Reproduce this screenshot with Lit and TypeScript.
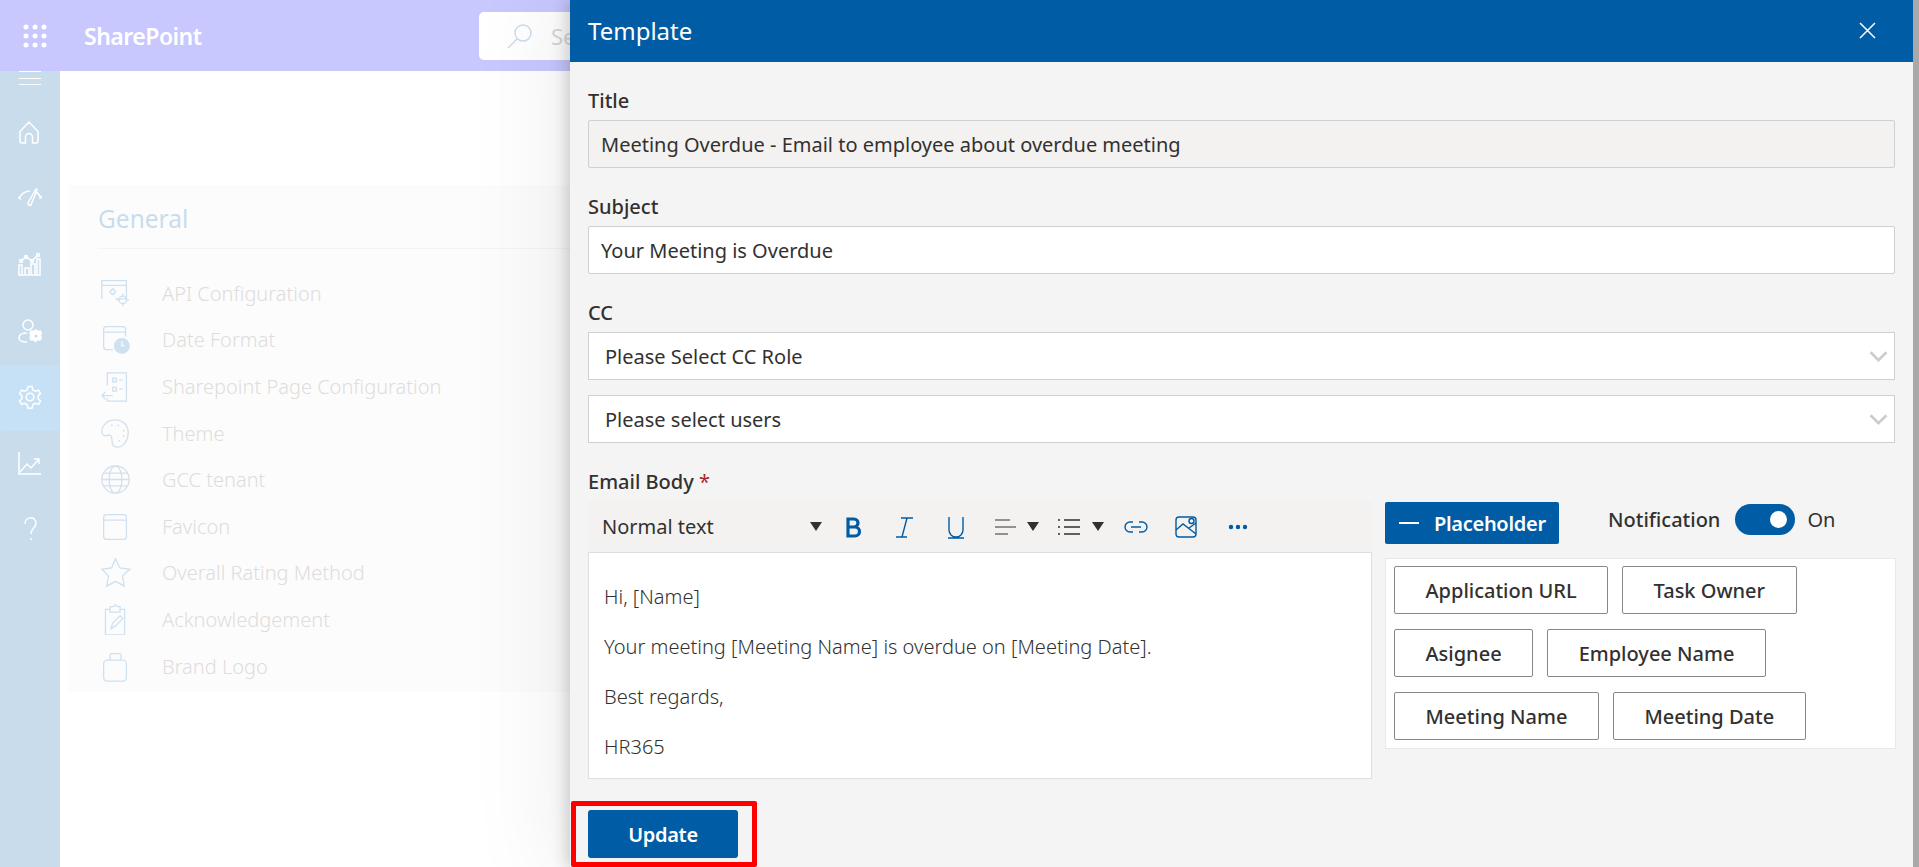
import { LitElement, html, css, svg } from "lit";
import { customElement } from "lit/decorators.js";

const line = (d: string) => svg`<path d=${d} />`;

const navIcons = [
  svg`<path d="M2 11.500 11 2l9 9.500V21a2 2 0 0 1-2 2h-3.500v-6a3.500 3.500 0 0 0-7 0v6H4a2 2 0 0 1-2-2z" />`,
  svg`<path d="M1 12.500A13 13 0 0 1 12 5M17.500 5.500A13 13 0 0 1 23 12.500M0 11l3 2.500M24 10l-2.500 3" /><path d="M18 3 10 17a2 2 0 0 0 3 2L19 4z" />`,
  svg`<path d="M1 23V13h3v10zM7 23V16h4v7zM13 23V12h4v11zM19 23V7h3v16zM1 23h21M3 9l5-4 6 4 6-6" /><circle cx="3" cy="9" r="1.500" /><circle cx="8" cy="5" r="1.500" /><circle cx="14" cy="9" r="1.500" /><circle cx="20" cy="3" r="1.500" />`,
  svg`<circle cx="10" cy="6" r="5" /><path d="M9 14c-5 0-8 2-8 5s3 4 8 4" /><path class="solid" d="m18 11 2 1.500 2.500-.5 1 2.500-1.500 2 1.500 2-1.500 2.500-2.500-.5-2 2-2-2-2.500.5-1-2.500 1-2-1-2 1-2.500 2.500.5z" /><circle cx="18" cy="17" r="1.500" fill="#c9dcec" stroke="none" />`,
  svg`<circle cx="12" cy="12" r="3.800" /><path d="m10 1.500h4l.8 3.300 2.500 1.400 3.200-1 2 3.400-2.400 2.300v2.800l2.400 2.300-2 3.400-3.200-1-2.500 1.400-.8 3.400h-4l-.8-3.400-2.500-1.400-3.200 1-2-3.400 2.400-2.300v-2.800l-2.400-2.300 2-3.400 3.200 1 2.500-1.400z" />`,
  svg`<path d="M1 1v22h22M2 21l7-8 4 4 8-9M16 8h5v5" />`,
  svg`<path d="M7 7c0-8 11-8 11-1 0 5-5 5-5 11" /><path d="M13 21v2" />`,
];

const listIcons = [
  svg`<path d="M2 23V3h27v20H17M2 8h27" /><circle cx="25" cy="24" r="4" /><circle cx="14" cy="15" r="2.500" /><path d="M25 17v3M25 28v3M18 24h3M29 24h3M14 11v1M14 18v1M10 15h1M17 15h1" />`,
  svg`<path d="M14 28H7a3 3 0 0 1-3-3V6a3 3 0 0 1 3-3h18a3 3 0 0 1 3 3v8M4 9h24" /><circle class="filled" cx="24" cy="24" r="8" /><path class="cut" d="M24 19v5h3" />`,
  svg`<path d="M8 16V2h21v31H8v-3" /><rect x="14" y="8" width="4" height="4" /><rect x="14" y="18" width="4" height="4" /><path d="M21 10h4M21 20h4M2 27h12M2 27l4-4M2 27l4 4" />`,
  svg`<path d="M17 2C8 2 2 8 2 15c0 4 3 5 6 4s5 0 5 4c0 6 2 9 6 9 7 0 12-8 12-16S25 2 17 2z" /><circle class="dot" cx="13" cy="8" r="1" /><circle class="dot" cx="20" cy="8" r="1" /><circle class="dot" cx="26" cy="14" r="1" /><circle class="dot" cx="26" cy="20" r="1" /><circle class="dot" cx="21" cy="25" r="1" />`,
  svg`<circle cx="17" cy="17" r="15" /><ellipse cx="17" cy="17" rx="7" ry="15" /><path d="M2 17h30M4 10h26M4 24h26" />`,
  svg`<rect x="4" y="4" width="25" height="27" rx="3" /><path d="M4 10h25" />`,
  svg`<path d="m17 2 4.800 10 10.700 1.500-7.800 7.500 2 11-9.700-5.300L7.300 32l2-11L2 13.500 12.700 12z" />`,
  svg`<path d="M11 6H6v28h21V6h-5M11 3h4l2-2 2 2h3v6H11zM12 27l2-6 8-8 3 3-8 8zM12 27l5-3" />`,
  svg`<rect x="4" y="10" width="25" height="23" rx="4" /><path d="M11 10V5a2 2 0 0 1 2-2h8a2 2 0 0 1 2 2v5" />`,
];

const settings = [
  "API Configuration",
  "Date Format",
  "Sharepoint Page Configuration",
  "Theme",
  "GCC tenant",
  "Favicon",
  "Overall Rating Method",
  "Acknowledgement",
  "Brand Logo",
];

const chipRows = [
  ["Application URL", "Task Owner"],
  ["Asignee", "Employee Name"],
  ["Meeting Name", "Meeting Date"],
];

const body = [
  "Hi, [Name]",
  "Your meeting [Meeting Name] is overdue on [Meeting Date].",
  "Best regards,",
  "HR365",
];

const chevron = html`<svg class="chev" viewBox="0 0 18 12"><path d="M1.500 2 9 9.500 16.500 2" /></svg>`;
const caret = html`<svg class="caret" viewBox="0 0 12 9"><path d="M0 0h12L6 9z" /></svg>`;

@customElement("app-root")
export class AppRoot extends LitElement {
  static styles = css`
    :host {
      display: block;
      position: relative;
      width: 100%;
      height: 867px;
      overflow: hidden;
      background: #fff;
      font-family: "Noto Sans", "Liberation Sans", sans-serif;
      color: #323130;
    }

    .topbar {
      height: 71px;
      background: #c8c8ff;
      display: flex;
      align-items: center;
      color: #fff;
    }
    .waffle {
      width: 24px;
      height: 24px;
      margin-left: 23px;
      fill: #fff;
      flex: none;
    }
    .brand {
      margin-left: 37px;
      font-size: 23px;
      font-weight: 600;
      letter-spacing: -0.5px;
      width: 395px;
      flex: none;
    }
    .search {
      width: 120px;
      height: 48px;
      background: #fff;
      border-radius: 5px 0 0 5px;
      display: flex;
      align-items: center;
      padding-left: 28px;
      box-sizing: border-box;
      color: #d8d8d8;
      font-size: 22px;
      flex: none;
    }
    .search svg {
      width: 26px;
      height: 26px;
      margin-right: 18px;
      fill: none;
      stroke: #c9dcec;
      stroke-width: 1.4;
      flex: none;
    }

    .page {
      display: flex;
      height: 796px;
    }
    nav {
      width: 60px;
      background: #c9dcec;
      display: flex;
      flex-direction: column;
      flex: none;
    }
    .burger {
      height: 28.500px;
      padding-left: 19px;
      flex: none;
    }
    .burger i {
      display: block;
      width: 22px;
      height: 1px;
      background: #fff;
      margin-bottom: 5.500px;
    }
    .nav-item {
      height: 66.300px;
      padding-bottom: 2px;
      box-sizing: border-box;
      display: flex;
      align-items: center;
      justify-content: center;
      flex: none;
    }
    .nav-item.active {
      background: #c6e1f6;
      border-radius: 4px;
    }
    .nav-item svg {
      width: 24px;
      height: 24px;
      fill: none;
      stroke: #fff;
      stroke-width: 1.500;
    }
    .nav-item svg .solid {
      fill: #fff;
    }

    main {
      flex: 1;
      padding: 114px 0 0 8px;
    }
    .card {
      height: 507px;
      background: #fcfcfc;
      padding: 13px 0 0 30px;
      box-sizing: border-box;
    }
    .card h2 {
      margin: 0;
      height: 50px;
      line-height: 42px;
      font-size: 24.500px;
      font-weight: 400;
      color: #c9dcec;
      border-bottom: 1px solid #f4f4f4;
    }
    .setting {
      height: 46.600px;
      display: flex;
      align-items: center;
      font-size: 20px;
      font-weight: 300;
      color: #e0dcdb;
    }
    .setting:first-of-type {
      margin-top: 21px;
    }
    .setting svg {
      width: 31px;
      height: 31px;
      margin: 0 31px 0 2px;
      fill: none;
      stroke: #cfe0ef;
      stroke-width: 1.400;
      flex: none;
    }
    .setting svg .filled {
      fill: #cfe0ef;
    }
    .setting svg .cut {
      stroke: #fcfcfc;
    }
    .setting svg .dot {
      fill: #cfe0ef;
      stroke: none;
    }

    .panel {
      position: absolute;
      top: 0;
      left: 570px;
      width: 1349px;
      height: 867px;
      box-sizing: border-box;
      background: #f4f4f4;
      box-shadow: 0 0 16px 2px rgba(0, 0, 0, 0.2), 0 0 90px 10px rgba(0, 0, 0, 0.08);
      border-right: 6px solid #a9a9a9;
    }
    .panel-head {
      height: 62px;
      background: #005ca4;
      color: #fff;
      display: flex;
      align-items: center;
      justify-content: space-between;
      padding: 0 37px 2px 18px;
      box-sizing: border-box;
      font-size: 24px;
    }
    .panel-head svg {
      width: 17px;
      height: 17px;
      stroke: #fff;
      stroke-width: 1.500;
      fill: none;
    }
    .panel-body {
      padding: 0 18px;
    }
    .label {
      height: 58px;
      box-sizing: border-box;
      padding-top: 26px;
      line-height: 25px;
      font-size: 20px;
      font-weight: 500;
    }
    .label b {
      color: #a4262c;
      font-weight: 400;
    }
    .input {
      height: 48px;
      box-sizing: border-box;
      border: 1px solid #d0d0d0;
      border-radius: 2px;
      background: #fff;
      display: flex;
      align-items: center;
      justify-content: space-between;
      padding: 0 12px;
      font-size: 20px;
    }
    .input.disabled {
      background: #f3f2f1;
    }
    .select {
      border-radius: 0;
      padding: 0 6px 0 16px;
      margin-bottom: 15px;
    }
    .chev {
      width: 19px;
      height: 13px;
      fill: none;
      stroke: #cccccc;
      stroke-width: 2.500;
    }
    .label.email {
      height: 43px;
      padding-top: 11px;
    }

    .compose {
      display: flex;
      gap: 13px;
    }
    .editor {
      width: 784px;
      flex: none;
    }
    .toolbar {
      height: 51px;
      background: #f3f2f1;
      display: flex;
      align-items: center;
      padding-left: 14px;
      box-sizing: border-box;
      font-size: 20px;
    }
    .toolbar .style {
      width: 208px;
    }
    .caret {
      width: 12px;
      height: 9px;
      fill: #323130;
      flex: none;
    }
    .tool {
      width: 24px;
      height: 24px;
      fill: none;
      stroke: #005ca4;
      stroke-width: 1.400;
      flex: none;
    }
    .tool.dark {
      stroke: #323130;
      stroke-width: 1.200;
    }
    .editor-text {
      height: 227px;
      box-sizing: border-box;
      background: #fff;
      border: 1px solid #dedede;
      padding: 30px 15px 0;
      font-size: 20px;
      font-weight: 300;
    }
    .editor-text p {
      margin: 0 0 22px;
      line-height: 28px;
    }

    .side {
      flex: 1;
      min-width: 0;
    }
    .side-top {
      display: flex;
      align-items: flex-start;
      height: 57px;
    }
    .ph-btn {
      width: 174px;
      height: 42px;
      margin-top: 1px;
      background: #005ca4;
      color: #fff;
      border-radius: 2px;
      display: flex;
      align-items: center;
      font-size: 20px;
      font-weight: 600;
      letter-spacing: -0.3px;
      box-sizing: border-box;
      padding-left: 14px;
      flex: none;
    }
    .ph-btn i {
      width: 20px;
      height: 1.500px;
      background: #fff;
      margin-right: 15px;
    }
    .notif {
      margin-left: 49px;
      height: 36px;
      display: flex;
      align-items: center;
      font-size: 20px;
    }
    .notif span:first-child {
      font-weight: 500;
    }
    .switch {
      width: 60px;
      height: 31px;
      margin: 0 12px 0 15px;
      border-radius: 16px;
      background: #005ca4;
      display: flex;
      align-items: center;
      justify-content: flex-end;
      padding-right: 8px;
      box-sizing: border-box;
    }
    .switch i {
      width: 17px;
      height: 17px;
      border-radius: 50%;
      background: #fff;
    }
    .chips {
      height: 191px;
      width: 511px;
      box-sizing: border-box;
      background: #fff;
      border: 1px solid #e8e8e8;
      padding: 7px 8px;
      display: flex;
      flex-direction: column;
      gap: 15px;
    }
    .chip-row {
      display: flex;
      gap: 14px;
    }
    .chip {
      height: 48px;
      box-sizing: border-box;
      border: 1px solid #8a8886;
      border-radius: 2px;
      padding: 0 30.500px;
      display: flex;
      align-items: center;
      font-size: 20px;
      font-weight: 500;
      white-space: nowrap;
    }
    .actions {
      margin-top: 31px;
    }
    .update {
      width: 150px;
      height: 48px;
      background: #005ca4;
      color: #fff;
      border-radius: 3px;
      display: flex;
      align-items: center;
      justify-content: center;
      font-size: 20px;
      font-weight: 600;
      letter-spacing: -0.3px;
    }

    /* annotation drawn on top of the screenshot */
    .marker {
      position: absolute;
      left: 571px;
      top: 801px;
      width: 186px;
      height: 66px;
      box-sizing: border-box;
      border: 5px solid #f00;
      border-radius: 2px;
    }
  `;

  render() {
    return html`
      <div class="topbar">
        <svg class="waffle" viewBox="0 0 24 24">
          ${[3, 12, 21].flatMap((y) =>
            [3, 12, 21].map((x) => svg`<circle cx=${x} cy=${y} r="2.500" />`)
          )}
        </svg>
        <div class="brand">SharePoint</div>
        <div class="search">
          <svg viewBox="0 0 26 26">
            <circle cx="16" cy="10" r="8" />
            ${line("M10 16 1 25")}
          </svg>
          <span>Se</span>
        </div>
      </div>
      <div class="page">
        <nav>
          <div class="burger"><i></i><i></i><i></i></div>
          ${navIcons.map(
            (icon, i) => html`
              <div class="nav-item ${i === 4 ? "active" : ""}">
                <svg viewBox="0 0 24 24">${icon}</svg>
              </div>
            `
          )}
        </nav>
        <main>
          <div class="card">
            <h2>General</h2>
            ${settings.map(
              (name, i) => html`
                <div class="setting">
                  <svg viewBox="0 0 34 34">${listIcons[i]}</svg>
                  <span>${name}</span>
                </div>
              `
            )}
          </div>
        </main>
      </div>

      <section class="panel">
        <header class="panel-head">
          <span>Template</span>
          <svg viewBox="0 0 17 17"><path d="M1 1l15 15M16 1 1 16" /></svg>
        </header>
        <div class="panel-body">
          <div class="label">Title</div>
          <div class="input disabled">Meeting Overdue - Email to employee about overdue meeting</div>
          <div class="label">Subject</div>
          <div class="input">Your Meeting is Overdue</div>
          <div class="label">CC</div>
          <div class="input select"><span>Please Select CC Role</span>${chevron}</div>
          <div class="input select"><span>Please select users</span>${chevron}</div>
          <div class="label email">Email Body <b>*</b></div>
          <div class="compose">
            <div class="editor">
              <div class="toolbar">
                <span class="style">Normal text</span>
                ${caret}
                <svg class="tool" style="margin-left:19px" viewBox="0 0 24 24">
                  <path stroke-width="3.200" d="M7 4h6a4 4 0 0 1 0 8H7h7a4.500 4.500 0 0 1 0 9H7z" />
                </svg>
                <svg class="tool" style="margin-left:28px" viewBox="0 0 24 24">
                  <path d="M8 3h12M3 22h11M14 3 9 22" />
                </svg>
                <svg class="tool" style="margin-left:27px" viewBox="0 0 24 24">
                  <path d="M5 2v13a7 7 0 0 0 14 0V2M4 23h16" />
                </svg>
                <svg class="tool dark" style="margin-left:25px" viewBox="0 0 24 24">
                  <path d="M2 5h15M2 12h21M2 19h13" />
                </svg>
                <svg class="caret" style="margin-left:10px" viewBox="0 0 12 9"><path d="M0 0h12L6 9z" /></svg>
                <svg class="tool dark" style="margin-left:18px" viewBox="0 0 24 24">
                  <path d="M7 5h16M7 12h16M7 19h16M1 5h2M1 12h2M1 19h2" stroke-width="1.500" />
                </svg>
                <svg class="caret" style="margin-left:11px" viewBox="0 0 12 9"><path d="M0 0h12L6 9z" /></svg>
                <svg class="tool" style="margin-left:20px" viewBox="0 0 24 24">
                  <path d="M9 7H6a5 5 0 0 0 0 10h3M15 7h3a5 5 0 0 1 0 10h-3M7 12h10" />
                </svg>
                <svg class="tool" style="margin-left:26px" viewBox="0 0 24 24">
                  <rect x="2" y="2" width="20" height="20" rx="3" />
                  <circle cx="17.500" cy="6" r="2.500" />
                  <path d="M2 15l7-6 13 10M15 13l7-5" />
                </svg>
                <svg class="tool" style="margin-left:28px" viewBox="0 0 24 24">
                  <circle cx="5" cy="12" r="1.500" fill="#005ca4" />
                  <circle cx="12" cy="12" r="1.500" fill="#005ca4" />
                  <circle cx="19" cy="12" r="1.500" fill="#005ca4" />
                </svg>
              </div>
              <div class="editor-text">${body.map((t) => html`<p>${t}</p>`)}</div>
            </div>
            <div class="side">
              <div class="side-top">
                <div class="ph-btn"><i></i>Placeholder</div>
                <div class="notif">
                  <span>Notification</span>
                  <div class="switch"><i></i></div>
                  <span>On</span>
                </div>
              </div>
              <div class="chips">
                ${chipRows.map(
                  (row) => html`
                    <div class="chip-row">
                      ${row.map((c) => html`<div class="chip">${c}</div>`)}
                    </div>
                  `
                )}
              </div>
            </div>
          </div>
          <div class="actions"><div class="update">Update</div></div>
        </div>
      </section>
      <div class="marker"></div>
    `;
  }
}
